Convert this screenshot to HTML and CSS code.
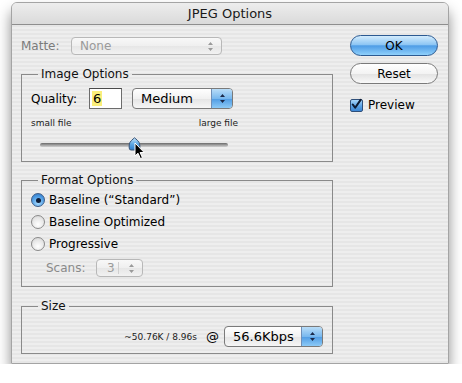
FILE: index.html
```html
<!DOCTYPE html>
<html lang="en">
<head>
    <meta charset="UTF-8">
    <title>JPEG Options</title>
    <link rel="stylesheet" href="styles.css">
</head>
<body>
    <div class="window">
        <div class="titlebar">JPEG Options</div>
        <div class="content">
            <div class="main">
                <div class="matte-row">
                    <span class="matte-label">Matte:</span>
                    <div class="popup popup-disabled matte-popup">
                        <span class="popup-text">None</span>
                        <svg class="arrows" width="7" height="11" viewBox="0 0 7 11"><path d="M3.5 1 L6 4 L1 4 Z M3.5 10 L6 7 L1 7 Z" fill="#9a9a9a"/></svg>
                    </div>
                </div>

                <fieldset class="group group-image">
                    <legend>Image Options</legend>
                    <div class="quality-row">
                        <label class="quality-label">Quality:</label>
                        <div class="field"><span class="selected">6</span></div>
                        <div class="popup medium-popup">
                            <span class="popup-text">Medium</span>
                            <span class="stepper">
                                <svg width="7" height="11" viewBox="0 0 7 11"><path d="M3.5 1 L6 4 L1 4 Z M3.5 10 L6 7 L1 7 Z" fill="#1b2a4a"/></svg>
                            </span>
                        </div>
                    </div>
                    <div class="slider-labels">
                        <span>small file</span>
                        <span>large file</span>
                    </div>
                    <div class="slider">
                        <div class="track"></div>
                        <svg class="thumb" style="left: 50%;" width="13" height="14" viewBox="0 0 13 14">
                            <defs>
                                <linearGradient id="thumbGrad" x1="0" y1="0" x2="0" y2="1">
                                    <stop offset="0" stop-color="#c9e6fb"/>
                                    <stop offset="0.5" stop-color="#5fa9e6"/>
                                    <stop offset="1" stop-color="#2f7fcf"/>
                                </linearGradient>
                            </defs>
                            <path d="M6.5 0.8 C8 2.2 11.8 4.6 11.8 8 L11.8 11 Q11.8 13 9.8 13 L3.2 13 Q1.2 13 1.2 11 L1.2 8 C1.2 4.6 5 2.2 6.5 0.8 Z" fill="url(#thumbGrad)" stroke="#3a5578" stroke-width="1"/>
                        </svg>
                        <svg class="cursor" width="12" height="18" viewBox="0 0 12 18">
                            <path d="M1 1 L1 14 L4 11.2 L6.4 16.6 L8.4 15.7 L6.1 10.5 L10.2 10.5 Z" fill="#000" stroke="#fff" stroke-width="1"/>
                        </svg>
                    </div>
                </fieldset>

                <fieldset class="group group-format">
                    <legend>Format Options</legend>
                    <div class="radio-row">
                        <span class="radio radio-on"><span class="dot"></span></span>
                        <span>Baseline (&ldquo;Standard&rdquo;)</span>
                    </div>
                    <div class="radio-row">
                        <span class="radio"></span>
                        <span>Baseline Optimized</span>
                    </div>
                    <div class="radio-row">
                        <span class="radio"></span>
                        <span>Progressive</span>
                    </div>
                    <div class="scans-row">
                        <span class="scans-label">Scans:</span>
                        <div class="popup popup-disabled scans-popup">
                            <span class="popup-text">3</span>
                            <span class="divider"></span>
                            <svg class="arrows" width="7" height="11" viewBox="0 0 7 11"><path d="M3.5 1 L6 4 L1 4 Z M3.5 10 L6 7 L1 7 Z" fill="#9a9a9a"/></svg>
                        </div>
                    </div>
                </fieldset>

                <fieldset class="group group-size">
                    <legend>Size</legend>
                    <div class="size-row">
                        <span class="size-info">~50.76K / 8.96s</span>
                        <span class="at">@</span>
                        <div class="popup speed-popup">
                            <span class="popup-text">56.6Kbps</span>
                            <span class="stepper">
                                <svg width="7" height="11" viewBox="0 0 7 11"><path d="M3.5 1 L6 4 L1 4 Z M3.5 10 L6 7 L1 7 Z" fill="#1b2a4a"/></svg>
                            </span>
                        </div>
                    </div>
                </fieldset>
            </div>

            <div class="side">
                <button class="btn btn-default">OK</button>
                <button class="btn">Reset</button>
                <label class="check-row">
                    <span class="checkbox">
                        <svg width="13" height="13" viewBox="0 0 13 13"><path d="M3 6.5 L5.6 10 L11.5 1.5" fill="none" stroke="#0d1b33" stroke-width="2.2" stroke-linecap="round" stroke-linejoin="round"/></svg>
                    </span>
                    <span>Preview</span>
                </label>
            </div>
        </div>
    </div>
</body>
</html>
```

FILE: styles.css
```css
body {
    margin: 0;
    background-color: #fff;
    font-family: "DejaVu Sans", sans-serif;
    font-size: 12px;
    color: #000;
}
.window {
    margin: 2px 0 0 11px;
    width: 438px;
    height: 362px;
    box-sizing: border-box;
    border: 1px solid #a4a4a4;
    border-radius: 6px 6px 0 0;
    background: repeating-linear-gradient(to bottom, #eeeeee 0, #eeeeee 2px, #e6e6e6 2px, #e6e6e6 4px);
    box-shadow: 0 9px 14px rgba(0, 0, 0, 0.45);
    display: flex;
    flex-direction: column;
    overflow: hidden;
}
.titlebar {
    height: 21px;
    line-height: 21px;
    border-bottom: 1px solid #8e8e8e;
    background: linear-gradient(#ededed, #dadada);
    text-align: center;
    font-size: 13px;
    color: #1a1a1a;
}
.content {
    display: flex;
    gap: 17px;
    padding: 10px 10px 0 9px;
}
.main {
    width: 312px;
    padding-top: 2px;
}

/* popup menus */
.popup {
    position: relative;
    display: flex;
    align-items: center;
    box-sizing: border-box;
    border: 1px solid #7a7a7a;
    border-radius: 4px;
    background: linear-gradient(#ffffff, #f1f1f1 50%, #e4e4e4 51%, #f6f6f6);
    overflow: hidden;
}
.popup-text {
    flex: 1;
    padding-left: 8px;
}
.popup-disabled {
    border-color: #b8b8b8;
    color: #9a9a9a;
    background: linear-gradient(#f8f8f8, #efefef 50%, #e6e6e6 51%, #f2f2f2);
}
.arrows {
    margin-right: 7px;
}
.stepper {
    width: 20px;
    align-self: stretch;
    display: flex;
    align-items: center;
    justify-content: center;
    border-left: 1px solid #6f8fb8;
    background: linear-gradient(#b9ddf8, #78b8ee 50%, #4f9be3 51%, #8ccaf7);
}

.matte-row {
    display: flex;
    align-items: center;
    height: 18px;
}
.matte-label {
    width: 50px;
    color: #7b7b7b;
}
.matte-popup {
    width: 151px;
    height: 18px;
}

/* group boxes */
.group {
    margin: 0;
    min-width: 0;
    box-sizing: border-box;
    width: 312px;
    border: 1px solid #8a8a8a;
    padding: 0 9px;
}
.group legend {
    padding: 0 3px;
    margin-left: 7px;
    line-height: 14px;
    font-size: 12px;
    color: #111;
}
.group-image {
    margin-top: 12px;
    padding-top: 7px;
    padding-bottom: 8px;
}
.group-format {
    margin-top: 11px;
    padding-top: 2px;
    padding-bottom: 9px;
}
.group-size {
    margin-top: 12px;
    padding-top: 13px;
    padding-bottom: 6px;
}

.quality-row {
    display: flex;
    align-items: center;
    height: 21px;
}
.quality-label {
    width: 58px;
}
.field {
    box-sizing: border-box;
    width: 33px;
    height: 21px;
    border: 1px solid #6c6c6c;
    border-top-color: #4a4a4a;
    background-color: #fff;
    padding: 2px 0 0 2px;
    font-size: 13px;
}
.selected {
    background-color: #fbef7b;
    padding: 0 1px;
}
.medium-popup {
    margin-left: 10px;
    width: 101px;
    height: 21px;
    font-size: 13px;
}

.slider-labels {
    display: flex;
    justify-content: space-between;
    width: 207px;
    margin-top: 8px;
    line-height: 12px;
    font-size: 9px;
    color: #222;
}
.slider {
    position: relative;
    margin: 8px 0 0 9px;
    width: 188px;
    height: 16px;
}
.track {
    position: absolute;
    left: 0;
    right: 0;
    top: 6px;
    height: 4px;
    border-radius: 2px;
    background: linear-gradient(#6a6a6a, #a9a9a9 60%, #d0d0d0);
}
.thumb {
    position: absolute;
    top: 0;
    margin-left: -6px;
}
.cursor {
    position: absolute;
    left: 50%;
    top: 5px;
}

.radio-row {
    display: flex;
    align-items: center;
    gap: 4px;
    height: 22px;
    font-size: 12px;
}
.radio {
    box-sizing: border-box;
    width: 14px;
    height: 14px;
    border-radius: 50%;
    border: 1px solid #8a8a8a;
    background: radial-gradient(circle at 50% 70%, #ffffff, #e6e6e6 60%, #cfcfcf);
    display: flex;
    align-items: center;
    justify-content: center;
}
.radio-on {
    border-color: #3d5d88;
    background: radial-gradient(circle at 50% 75%, #a9dbff, #4c9be3 60%, #2d6fbe);
}
.dot {
    width: 5px;
    height: 5px;
    border-radius: 50%;
    background-color: #0f1e38;
}
.scans-row {
    display: flex;
    align-items: center;
    margin-top: 4px;
    padding-left: 15px;
    height: 18px;
}
.scans-label {
    width: 50px;
    color: #8a8a8a;
}
.scans-popup {
    width: 47px;
    height: 18px;
}
.scans-popup .popup-text {
    padding-left: 10px;
}
.divider {
    width: 1px;
    height: 12px;
    margin-right: 9px;
    background-color: #cfcfcf;
}

.size-row {
    display: flex;
    align-items: center;
    justify-content: flex-end;
    height: 21px;
}
.size-info {
    font-size: 9px;
    color: #222;
}
.at {
    margin: 0 5px 0 9px;
    font-size: 13px;
}
.speed-popup {
    width: 99px;
    height: 21px;
    font-size: 13px;
}

/* right column */
.side {
    width: 88px;
    display: flex;
    flex-direction: column;
}
.btn {
    width: 88px;
    height: 21px;
    margin: 0 0 7px 0;
    border: 1px solid #7a7a7a;
    border-radius: 11px;
    font-family: "DejaVu Sans", sans-serif;
    font-size: 12px;
    color: #000;
    background: linear-gradient(#ffffff, #f3f3f3 50%, #e2e2e2 51%, #f9f9f9);
    padding: 0;
}
.btn-default {
    border-color: #2c5a92;
    background: linear-gradient(#d3ecfd, #8ec6f4 45%, #4f9de6 52%, #8fd0fb);
}
.check-row {
    display: flex;
    align-items: center;
    gap: 5px;
    margin-top: 7px;
    font-size: 12px;
}
.checkbox {
    box-sizing: border-box;
    width: 13px;
    height: 13px;
    border: 1px solid #2f4f7a;
    border-radius: 2px;
    background: linear-gradient(#a8d6fa, #5aa2e5 55%, #3c86d4);
    display: flex;
}
.checkbox svg {
    margin: -2px 0 0 -1px;
}
```
